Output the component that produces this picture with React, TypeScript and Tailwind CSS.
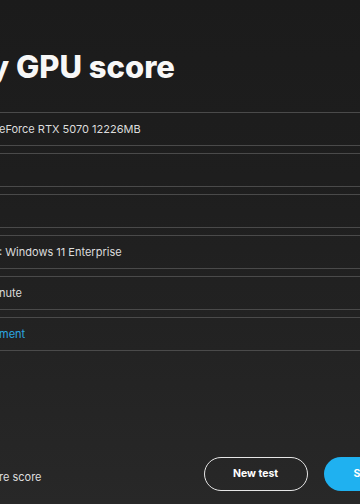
import React from "react";

const rows: { text: string; link?: boolean; shift: string }[] = [
  { text: "eForce RTX 5070 12226MB", shift: "-ml-[1px]" },
  { text: "", shift: "" },
  { text: "", shift: "" },
  { text: ": Windows 11 Enterprise", shift: "-ml-[1px]" },
  { text: "nute", shift: "-ml-[1px]" },
  { text: "ment", link: true, shift: "-ml-[1px]" },
];

export default function App() {
  return (
    <div
      className="w-[360px] h-[504px] overflow-hidden flex flex-col bg-[linear-gradient(180deg,#1b1b1b_0%,#1e1e1e_35%,#232323_70%,#282828_100%)]"
      style={{ fontFamily: "Inter, 'Noto Sans', sans-serif" }}
    >
      <h1 className="mt-[51px] -ml-[10px] whitespace-nowrap text-[31px] leading-[31px] font-extrabold text-[#f7f7f7]">
        y GPU score
      </h1>

      <div className="mt-[30px] flex flex-col gap-[7px]">
        {rows.map((r, i) => (
          <div
            key={i}
            className="h-[34px] border-y border-[#4a4a4a] flex items-center"
          >
            {r.text && (
              <span
                className={`${r.shift} whitespace-nowrap text-[11px] ${
                  r.link ? "text-[#2ba6e0]" : "text-[#dcdcdc]"
                }`}
              >
                {r.text}
              </span>
            )}
          </div>
        ))}
      </div>

      <div className="mt-[106px] flex items-center whitespace-nowrap">
        <span className="shrink-0 -ml-[1px] mt-[6px] text-[11px] text-[#dedede]">
          re score
        </span>
        <button className="shrink-0 ml-[162px] w-[104px] h-[34px] rounded-full border-[1.5px] border-[#e6e6e6] text-[10.5px] font-bold text-white flex items-center justify-center">
          New test
        </button>
        <button className="shrink-0 ml-[16px] w-[110px] h-[34px] rounded-full bg-[#1fb1f0] text-[10.5px] font-bold text-white flex items-center pl-[30px]">
          Save score
        </button>
      </div>
    </div>
  );
}
